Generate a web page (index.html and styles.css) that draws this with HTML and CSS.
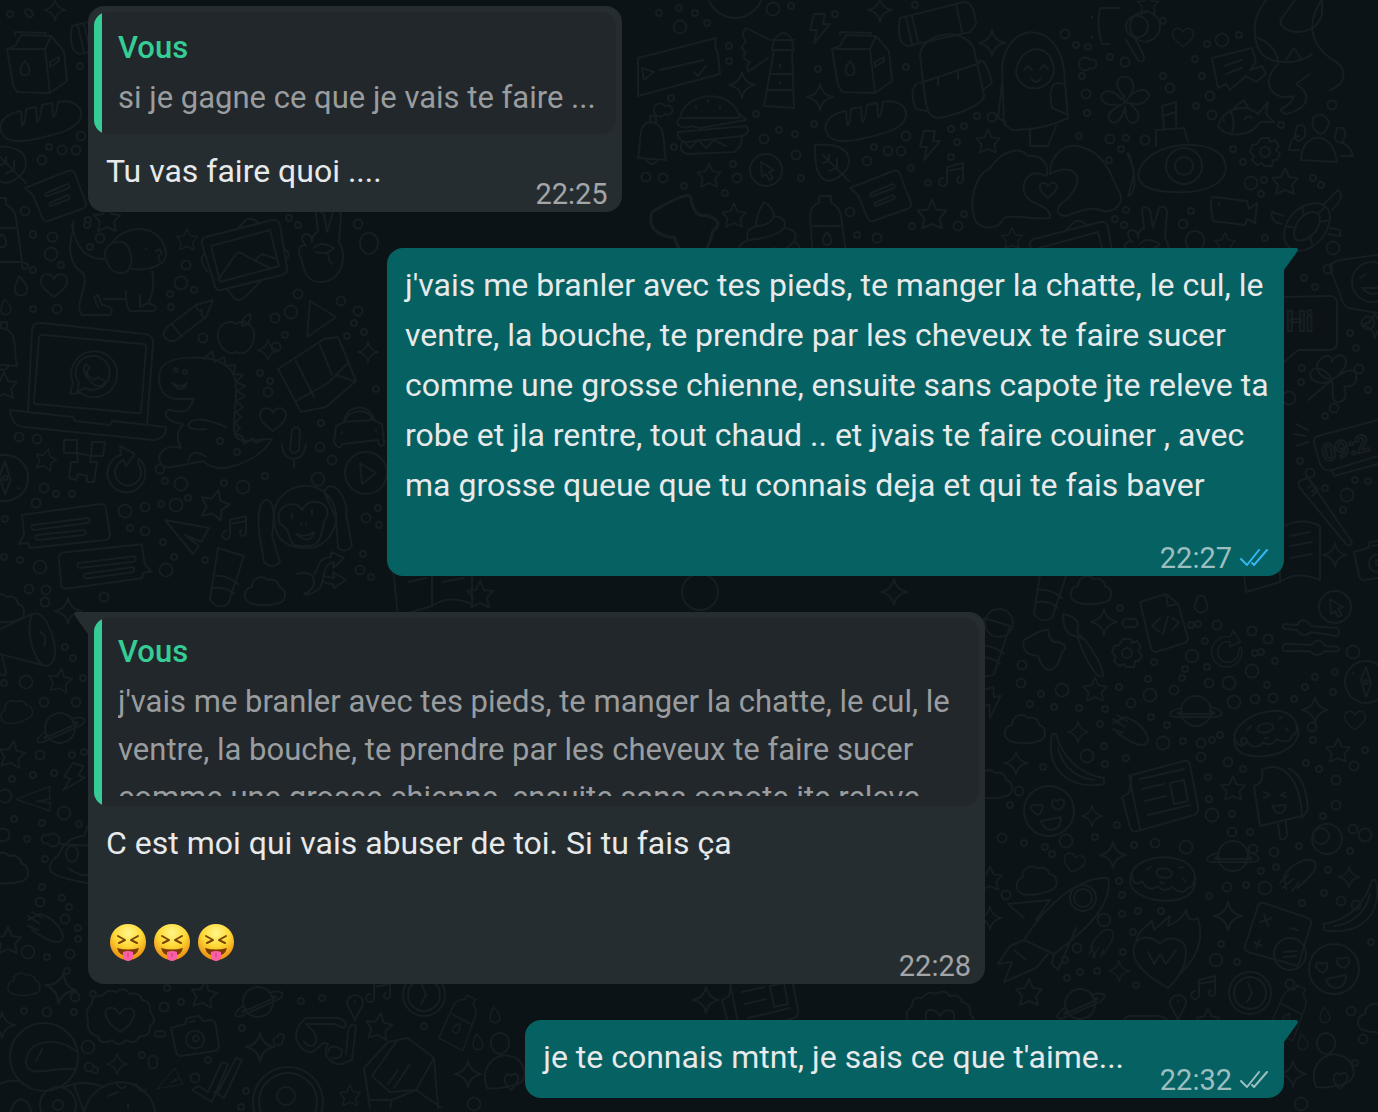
FILE: index.html
```html
<!DOCTYPE html>
<html lang="fr">
<head>
  <meta charset="UTF-8" />
  <meta name="viewport" content="width=device-width, initial-scale=1" />
  <title>Discussion</title>
  <link rel="stylesheet" href="styles.css">
</head>
<body>
  <svg class="wallpaper" viewBox="0 0 1378 1112" preserveAspectRatio="xMidYMin slice" aria-hidden="true">
    <defs>
      <path id="star" d="M0-13 4-4 13-3 7 4 9 13 0 9-9 13-7 4-13-3-4-4Z" />
      <path id="spark" d="M0-13Q2-2 13 0 2 2 0 13-2 2-13 0-2-2 0-13Z" />
      <path id="heart" d="M0 12C-8 6-14 1-13-5-12-12-3-13 0-6 3-13 12-12 13-5 14 1 8 6 0 12Z" />
      <path id="drop" d="M-2-10C4-4 7 0 6 5 4 11-5 11-6 5-7 0-4-4-2-10Z" />
      <path id="egg" d="M0-11C6-11 10-5 9 1 8 7 3 10 0 10-3 10-8 7-9 1-10-5-6-11 0-11Z" />
      <path id="cloud" d="M-15 12C-23 8-21-3-13-4-13-13-3-17 3-11 10-13 14-8 14-4 22-2 22 10 14 12 5 15-7 15-15 12Z" />
      <path id="bolt" d="M-6-14H5L3-4H10L-6 15-3 2H-10Z" />
      <g id="carton">
        <path d="M-22-17-16-28 14-27 27-12 30 18 13 30-20 29-24 22-30-14ZM-30-14 8-14 13 30M8-14 14-27M-22-28V-31L9-30V-27" />
        <path d="M-12-2C-6 5-6 12-12 12-18 12-18 5-12-2ZM13-1 22-6V-2L13 4Z" />
      </g>
      <path id="bread" d="M-38 14C-46 2-34-8-20-10L-19 4Q-16 5-15-12L-5-14-4 1Q-1 1 1-16L11-18 12-4Q15-4 17-19C32-22 42-14 40-4 36 10 12 14-10 19-22 21-34 21-38 14Z" />
      <path id="note" d="M-31-7 12-24Q17-26 19-21L30 8Q31 12 26 14L-8 26Q-12 27-14 22L-23 0ZM-10-2 12-11Q15-9 13-7L-8 1Q-12 2-10-2ZM-6 8 12 0Q15 1 13 4L-5 11Q-8 11-6 8Z" />
      <path id="leaf" d="M-18-18C0-20 16-16 16-2 16 10 0 20-8 17-18 12-18-4-18-18ZM-10-8 16 18M-4-8V-2L-10 0M4-4V5L-4 8" />
      <path id="bottle" d="M-14 30-17-14C-17-22-12-26-8-27V-34H4V-27C10-25 13-20 14-14L20 30ZM-14-4H15M0 2C6 9 5 15 0 15-5 15-6 9 0 2Z" />
      <g id="laptop">
        <path d="M-58 30-54-52Q-53-60-44-59L59-48Q68-47 67-38L61 42M-52 19-47-44Q-47-48-42-47L57-38Q61-38 60-33L55 29Q55 32 51 31L-50 22Q-53 22-52 19Z" />
        <path d="M-76 28-13 35-11 39 24 43 26 39 80 45Q80 57 67 58L-62 45Q-74 44-76 28Z" />
        <path d="M-16 12-13 1A23 23 0 1 1-5 11ZM-9 10-7 1A17 17 0 1 1-1 6ZM0-18C-8-12 8 9 17 3L19-1 12-5 8-2C4-4 0-8 1-11L4-14Z" />
      </g>
      <g id="dino">
        <path d="M31 50C23 53 10 50 6 44-10 46-32 54-36 48-46 36-28 26-17 31-24 16-18 12-15 7-29 5-36-1-30-7-26-9-22-2-10-7L-4-18H-20C-42-18-42-46-34-52-22-62 4-60 18-57 34-50 39-42 38-24 38-8 34 6 37 18 42 28 60 22 74 22 66 36 50 46 31 50Z" />
        <path d="M6-58 14-66 17-55 26-60 28-51 37-52 36-43 45-42 38-35 47-31 39-26 47-21 38-16 45-10 38-5 43 0 37 6 42 11 37 16 45 20 46 27 55 21 58 26 66 22M-26-34Q-16-28-11-34-16-22-26-34M-10 8Q-4-4 28 10M-10 8Q-8 14 8 12M-10 44Q-6 30 8 40" />
        <circle cx="-22" cy="-47" r="2" /><circle cx="-13" cy="-45" r="2" />
      </g>
      <path id="dog" d="M-44-38C-50-20-50 0-35 8-28 20-45 40-36 50H-8Q-2 42-16 40L-20 30-24 32-20 42M-14 34H8M8 26Q8 50 16 46H36Q42 42 30 38L22 42V30M30 38Q38 24 34 6M-46-38-44-44M-46-40Q-40-4-12-6M-12-6C-18-20 2-30 10-18 16-8 14 8 4 8-8 8-10 0-12-6ZM-6-22C8-42 44-42 48-12 50 0 30 6 14 4M28-17V-16M38-14 42-16 44-11Q38-10 42-4" />
      <path id="photo" d="M-38-25 28-42Q34-43 36-37L43 6Q44 11 38 13L-23 28Q-28 29-29 24L-42-18Q-43-24-38-25ZM-33-16 26-32 35 4-24 20ZM-26 18-8-8Q-4-11 2-6L26 6M10-1 18-8 33-3M-8-32 2-42Q8-46 16-38M-16 28-10 36Q-6 40 0 36L16 20M-40-8Q-46-2-36 10M40-14Q48-8 42-2" />
      <path id="peace" d="M-18-8Q-26-18-18-20-12-20-12-12-12-20-6-22L-8-40Q-6-46 0-40L3-22 9-42Q16-46 17-38L15-12C24 2 18 28-4 28-22 28-20 8-24 2-28-8-20-10-18-8M-10-6Q-4-14 10-6 2 2-8-2M4-2Q4 6 8 10" />
      <path id="pencil" d="M-25 12-22 6 8-17 25-22 18-5-12 18Q-20 22-25 12ZM-16 2-6 15M8-17Q8-10 14-12 12-4 18-5" />
      <path id="apple" d="M0-10C8-16 20-8 18 4 16 16 8 22 0 18-8 22-16 14-18 4-20-10-6-16 0-10ZM6-8Q6-18 14-20 16-12 8-8" />
      <path id="map" d="M-38-6 8-36 22-38 40 6 10 32-15 37ZM-20-14-2 22M4-30 16 0M-20 26 12 8 32-12M20 0 38 6" />
      <path id="car" d="M-24 14-22-2-14-6C-12-24 12-26 16-8L24-4 26 16Q22 22 20 12L-16 16Q-18 24-24 14ZM-14-6 14-8C12-20-8-20-14-6ZM-16 4V5M18 2V3" />
      <path id="mic" d="M-4 4-2-16Q2-22 6-16L5 4Q0 10-4 4ZM-12-2Q-12 12 0 13 10 12 12-2M0 13V22" />
      <path id="monkey" d="M0-26C22-28 36-10 34 10 30 28 16 38 0 36-20 34-28 24-28 4-28-14-14-24 0-26ZM-22 12C-30-6-6-14 0-2 8-18 32-8 24 6 18 14 24 36 2 34-20 34-6 20-22 12ZM-6 22Q4 26 12 20 8 34-6 22M-10 2V6M10-2V2M-1 12V13M4 12V13M-40 38C-46 8-44-10-36-12-26-12-28 8-30 24L-22 50Q-30 58-38 50ZM22-20C30-38 48-10 44 2L50 34Q44 42 36 36L34 6Z" />
      <path id="creeper" d="M-20-22H-7V-9H-20ZM8-20H21L19-6H7ZM-7-9 7-6 6 0H13L10 20H3V14L-6 12-8 18-15 16-13 0H-6Z" />
      <path id="refresh" d="M10-13A19 19 0 1 1-8-17L-9-26 6-18-3-6-5-12A13 13 0 1 0 9-8Z" />
      <g id="compass"><circle r="21" /><path d="M0-15 5 2 0 15-5-2ZM-13-9-12-8M12 9 13 10" /><circle r="2" /></g>
      <path id="speech" d="M-42-12 36-23Q42-23 42-18L46 8Q46 12 41 13L-34 21-36 16-45 17-40 8ZM-32-2 24-9Q28-6 24-4L-30 3Q-34 2-32-2ZM-28 8 20 3Q24 5 20 8L-26 13Q-30 12-28 8Z" />
      <path id="plane" d="M-22-16 22-8 14 6-2-1 12 10 6 18Z" />
      <path id="music" d="M-8 7V-7L8-11V6M-8-3 8-6M-8 7A4 4 0 1 1-12 4M8 6A3 3 0 1 1 4 3" />
      <path id="tube" d="M-8-28 18-20 2 28Q-8 34-16 24L-14 10ZM-13 0Q0-2 12 8M-14 12Q0 10 8 18" />
      <g id="play"><circle r="21" /><path d="M-6-10 10 0-4 11Z" /></g>
      <path id="shuffle" d="M-22 2Q-4-2-4 10-4 18-14 22M-14 22Q-8 24 2 16C8 2 4-8 16-10L15-4 26-14 13-20V-15C-2-14 2-4-4 2M6 4 16 6 15 0 28 8 16 16 15 12Q6 12 4 8" />
      <path id="megaphone" d="M-48 12-20-10 22-30Q36-34 44-2 48 20 36 22L-10 10-38 18ZM22-30Q16-14 24 8 30 22 36 22M-16 12-10 30Q-4 34-4 28L-8 12M30-12Q38-8 34 2" />
      <g id="planet"><circle r="15" /><path d="M-14-3C-30 0-28 6-20 6L20 6C30 4 26-2 14-4M-14 1Q-22 3-16 3H16Q22 3 14 0" /></g>
      <path id="glove" d="M-18-8-6-14C8-10 20 4 16 12 10 18-2 10-14 2M-18-12-6-4M-18-2-8 2M-14-16-4-10" />
      <path id="banana" d="M-26-28-22-28C-16-6 0 12 26 16V22C0 28-34 14-26-28ZM-20-14C-16 4-2 16 16 18" />
      <path id="donut" d="M-32 8C-36-12-10-24 12-22 28-20 34-8 32 4 26 26-28 28-32 8ZM-32 0Q-28 14-20 6-12 16-4 8 4 14 10 6 22 14 26 4 32 4 31-8M-8-6C-6-12 8-12 8-6 6 0-8 0-8-6ZM-18-6-14-10M14-14 18-15M20-4 22-1M-2 4H2" />
      <path id="paper" d="M-28-22 24-36Q29-37 30-32L38 10Q39 16 34 18L-22 34Q-28 36-30 30L-38 0-31-4ZM-31-22-20 32M-20-18 24-28M-18-8 4-13M-15 4 6-1M-12 18 30 8M10-14 24-17 28 4 14 7Z" />
      <g id="popsicle"><path d="M-16-30C0-40 22-26 24 16L-18 26-24-14Q-14-16-16-30ZM10-32Q28-24 30 10L24 18M0 24 2 38Q6 42 9 36L8 22M-14-2-8-5-14-8M8-8 3-5 8-3M-6 6 8 5Q6 16-2 12Z" /></g>
      <g id="love"><circle r="25" /><path d="M-11 4C-22-2-18-10-12-5-6-10-4-2-11 4ZM10-1C0-4 2-14 8-10 16-15 18-6 10-1ZM-8 10 12 6Q12 18 2 19-6 18-8 10Z" /></g>
      <g id="calc"><path d="M-14-33 30-18Q34-16 33-12L20 30-30 16Q-34 14-33 10L-20-30Q-18-34-14-33ZM-14-22-10-10M-18-14-6-18M-24 6-16 10M-22 12-18 4M12-8 20-6" /><circle cx="12" cy="18" r="16" /><path d="M6 16 18 15M6 21 18 20" /></g>
      <path id="fireheart" d="M0 38C-36 18-38 2-32-8-24-16-14-12-8-6 0-16 18-12 18 2 18 20 8 30 0 38ZM-32-8C-30-20-22-22-16-30L-14-20 2-34 0-24Q14-30 18-40 20-26 30-32C36-10 30 6 12 24M-20 2-14 14-8 4-2 14 8 0" />
      <g id="rocket"><path d="M-26 16C-4-20 30-48 58-46 64-20 36 6 4 30ZM-26-6-42-20 0-24-14-4M4 30 2 40 8 46 26 4M-26 16-40 22-52 40-38 38-46 58-14 44-2 30M-36 26-24 36" /><circle cx="33" cy="-26" r="13" /><circle cx="33" cy="-26" r="9" /></g>
      <g id="clock"><circle r="21" /><circle r="16" /><path d="M-2-10 2 0-3 9" /></g>
      <g id="gear"><circle r="5" /><path d="M-4-14H4L5-10 10-12 14-6 11-2 15 2 12 8 8 8 7 14H-1L-3 11-8 13-13 8-11 4-15 0-13-7-8-8Z" /></g>
      <path id="code" d="M-24-22 2-30 14-20 24 14Q24 18 20 19L-8 28Q-12 28-13 24ZM2-30 4-18 14-20M-4-6-12 2-4 8M4-8-1 10M8-6 15-2 8 6" />
      <path id="brush" d="M-20-30C-8-28-2-22-6-12L2-4C10 6 20 22 20 32 14 38 0 10-6-8-16-8-20-16-20-30ZM-6-8 2-4" />
      <path id="splat" d="M-20-10Q0-22 4-20 6-6 14-8 26-4 18 2 14 20 4 20-2 18-6 6-24 4-20-10Z" />
      <path id="slide" d="M-27-9-14-8Q-8-18 0-7L26-5Q30 0 26 3L0-1Q-8 6-14-3L-26-4Q-30-6-27-9Z" />
      <g id="pointer"><circle r="16" /><path d="M-5-8 8 0 3 2 7 8 3 10 0 4-4 7Z" /></g>
      <path id="burger" d="M-32-10C-28-36 20-42 28-10ZM-32-10C-40-4-30 2-20-2L-12 0 34-8 28-14M-34 4 34-2Q40 4 30 8L-26 14Q-36 12-34 4ZM-30 14Q-34 24-24 26L22 24Q30 20 30 8M-16-22V-20M-4-28V-26M8-22V-20M-28 14-22 20-14 12-6 20 2 12 14 18" />
      <path id="tower" d="M-8-30Q2-44 10-30L12-20H-10ZM-8-20-18 36 12 38 10-20M-12 4H10M-15 20H10M-2-6V-2M-2 12V14M-10-30H12M-14-12-34 2Q-36-6-32-8-42-12-36-18-44-22-36-28-42-36-36-42L-12-30" />
      <path id="pack" d="M-30-20C-28-42 14-50 24-26L34 20C36 30-8 46-16 42-24 38-24 34-30-20ZM-30 8 30-12M-32 8Q-42 14-34 34L-24 36M28-14Q36-18 42 8L34 14M-12 2V10M8-6V4" />
      <path id="scroll" d="M-34-8 30-24Q40-24 42-2L36 6-26 20Q-38 18-34-8ZM-28-8-22 18M-22-10-16 16M22-22 28 6" />
      <path id="sloth" d="M-32 40-34-16C-30-64 22-64 28-14L32 34Q8 46-24 46ZM-20-12C-16-42 16-42 18-14 16 8-16 12-20-12ZM-12-14-8-18-4-14M4-15 8-19 12-15M-5-6Q0 2 5-6M-6 44V62H12L20 42M-34 0-38 34-30 38M28 0Q10-6 16 24L30 30" />
      <path id="lens" d="M-30-28H-10M-30-28Q-34-10-28 8H-20M0-10A15 15 0 1 1 0-9M-4-10A11 11 0 1 1-4-9M-4 4 8 24Q14 28 14 20L4 0M-38-20V-18M-38 0V2" />
      <path id="flower" d="M0-4C-14-18-6-26 0-24 8-24 12-14 4-4 18-18 28-8 22-2 18 4 10 4 4 2 20 14 12 22 8 22 2 22 0 12 0 6-4 24-14 24-16 18-18 10-8 6-4 4-24 6-26-4-22-8-16-12-8-8-4-2ZM-2-2 2 2M-2 3 3-2" />
      <path id="arrownote" d="M-26-12 14-22 18-8 12 0 24-4 28 4 18 12 8 6-8 20-12 14-20 18ZM-14-4 4-10M-12 4 4-2" />
      <path id="fish" d="M-26 8C-22-8 0-16 14-4L24-16 22-4 30 4 16 4C6 20-18 20-26 8ZM-14-8Q-8 4-12 14M-10-10 0-18 4-10M-20 2V3M0 2Q4-4 8 0" />
      <path id="hands" d="M-70 40C-78 20-72-6-56-14-44-32-26-36-18-26-2-28 4-14 0-6-16-14-24-2-22 10-18 24 6 22 4 36-14 38-30 32-42 36-48 48-62 48-70 40ZM4-8C4-26 18-42 38-34 60-28 68 0 72 8 82 20 66 34 54 28 46 24 30 30 20 34 8 34 10 24 20 18 30 8 38-6 24-12 14-14 8-10 4-8ZM2 16C-14 4-2-4 2 4 8-4 18 4 2 16Z" />
      <g id="eye"><path d="M-34 10C-32-20 28-32 50-10 64 14 36 28 4 26-18 26-32 22-34 10ZM-38 4Q-48-20-42-10L-38 8Q-36 28-44 30L-38 8M-16-20V-36L12-38 16-24M-8-36-10-60 4-64V-40M-10-50 4-54" /><circle cx="12" cy="0" r="18" /><circle cx="12" cy="0" r="9" /></g>
      <path id="people" d="M-20 18C-20-10 12-14 16 20ZM-8-24Q2-32 8-20 4-4-4-10-10-14-8-24M-24-16Q-14-20-16-6-24 4-26-6ZM16-14Q28-16 22 0 14 2 14-6ZM-22 8H-32Q-30-6-22-6M20 0Q30 4 32 14H20" />
      <path id="camcorder" d="M-20-14 14-10 16-2 24-8 22 12 14 8 12 14-20 10Q-24-14-20-14ZM-14-8V-6" />
      <path id="turtle" d="M-24 12C-24-20 20-32 22-8 22 22-20 42-24 12ZM-14 10C-12-12 10-18 12-6 12 14-14 24-14 10ZM-22 2-12 4M-6-18-4-8M16-16 10-10M22-4 12-2M4 20 2 12M-24-8-36-12Q-38-2-26 0M16-20 30-34Q38-28 24-14M22 4 32 6V12L20 10" />
      <path id="whip" d="M-28 30Q-36 20-22 14-26 4-14 0-14-12-6-24 4-18 4-10 18-8 14 2 30 4 24 16 34 20 28 34M-22 14Q6 12 14 2M-14 0Q0 0 4-10M-28 30Q-4 30 4 22L12 26 24 16" />
      <path id="snake" d="M24-56C-18-48-40-20-28 14-18 34 14 30 26 20M40-40C24-20 18 4 44 24 64 34 60 50 44 56M-8 30C-28 50-12 68 8 62 4 76-14 74 0 80 24 74 26 60 10 50L24 40M36-44V-20C28 10-14-4-4-16L16-44M-28 4Q-12 10-8 26M0 26 8 14 16 26" />
      <path id="clover" d="M0 0C-16-4-18-14-12-20-8-26 0-26 0-18 4-28 14-26 14-18 14-10 6-4 0 0 16-12 24-12 24-4 26 2 20 8 12 6 16 18 12 22 6 22-2 22 2 12 0 0-6-12-20-16-22-6-22 2-8 6 0 0ZM0 0-24 20" />
      <path id="toothbrush" d="M-26-28Q-30-34-24-36L-18-38 26 26Q24 32 20 28ZM-18-38-8-26-14-20M-14-32-18-28M-10-28-14-24" />
      <g id="smile"><path d="M-18-20 26-26V34L-10 28Q-16 24-18 14L-28-12Q-28-18-18-20Z" /><circle cx="14" cy="2" r="20" /><path d="M2-2 8-6M4 8H24Q16 20 4 8" /></g>
      <path id="camera" d="M-24-8-10-12-8-18 4-20 8-15 16-16Q20-16 21-10L24 10Q24 14 20 15L-14 20Q-18 20-19 16ZM-9 3A9 9 0 1 1-9 4M-2 2A3 3 0 1 1-2 3M-6-14 0-15" />
      <path id="glasses" d="M-26-18C-36-4-24 12-14 10-6 6-4-2 2 2-6 14 8 24 16 22L26 18 30-16Q24-20 22-10L20 12M-26-18-20-24 12-24Q24-20 18-14L8-18-20-18Q-8-8-10 0-14 8-22 0M2 10Q4 0 16 8 16 18 6 16" />
      <path id="badge" d="M-32 2Q-36-8-28-14-28-24-18-22-12-30-4-26 4-32 10-24 20-26 22-18 32-16 30-6 38 2 30 8 30 20 20 18 14 28 6 22-2 30-8 22-20 28-22 18-34 16-32 2ZM0 14C-20 0-16-12-8-10-2-10-2-4 0-4 4-12 16-12 14-2 12 6 6 10 0 14Z" />
      <g id="astro"><circle r="34" /><path d="M32-6C10-22-18-16-18 6-16 22 8 10 32 12M-8 4-2-8M-26 24Q-44 22-50 34M20 30Q40 22 60 30M-34 62C-34 36-12 36-12 62M30 28 42 60" /><circle cx="14" cy="48" r="18" /><circle cx="14" cy="48" r="5" /></g>
      <path id="cow" d="M-38 30C-34 6-20-8 4-8 28-4 36 14 36 30M-12 6-2 2M-4-8Q0 2 6-4M16-6Q20 4 26 0M8 14V18" />
      <path id="ticks" d="M-26 10-20 6-10 12 4-18 10-16-6 22ZM0 12 18-22 24-20 6 18-4 12" />
      <path id="gem" d="M-40-10-16-36 4-40 30-20 34 30M-40-10-34 30M-32-2-8-36M-32-2-14 14 12 12 30-20M-36 22H-12L12 12 38 30M-12 22-14 30M-16 6-6-8M-10 10 6-14" />
      <path id="mushroom" d="M-18 14C-26-8-8-22 4-18 18-16 24 0 16 8 10 12-10 16-18 14ZM6 16C-6 6 2-4 6 2 10-4 20 2 6 16Z" />
      <path id="pin" d="M0 14C-4 4-8 2-8-4-6-14 8-12 8-4 8 2 4 4 0 14ZM0-5V-4" />
      <path id="bell" d="M-14 18 14 20C10 4 16-14 0-18-16-18-10 2-14 18ZM-2-18V-24H4V-18M-6 20Q0 28 6 20" />
      <path id="boat" d="M-34 10C-36 0-24-4-24-8-18-22-4-24 0-24L4-34 10-28V24Q-30 18-34 10ZM-18-6A6 8 0 1 1-6-6 6 8 0 1 1-18-6M-16 8Q0 20 10 12M-24-16 10-14" />
      <path id="book" d="M-40-30 0-38Q20-50 40-40V14Q16 4 0 16L-34 26ZM0-38V16M-26-18-8-22M-24-8-6-12M10-30 30-34M10-20 32-24M10-8 32-12" />
      <path id="banner" d="M-40-8 38-28Q36-18 40-12L42 8-40 30ZM-36 2-24 6-34 14ZM-18 4 26-6M16 6 20 10 28 0" />
      <path id="dots-s" d="M10 14h0M30 14h0M28 12h0M80 66h0M49 147h0M33 235h0M87 225h0M25 266h0M88 220h0M33 234h0M61 265h0M33 270h0M33 309h0M90 247h0M170 294h0M171 307h0M194 290h0M289 218h0M298 225h0M285 335h0M347 336h0M354 323h0M364 332h0M260 373h0M270 381h0M321 423h0M376 389h0M56 494h0M72 494h0M165 481h0M188 498h0M161 504h0M224 483h0M265 476h0M220 441h0M237 452h0M5 519h0M4 557h0M20 560h0M130 528h0M163 542h0M174 557h0M205 560h0M363 554h0M379 525h0M378 508h0M371 577h0M4 683h0M65 647h0M73 658h0M83 678h0M72 755h0M84 752h0M12 779h0M33 775h0M54 773h0M14 819h0M42 823h0M79 824h0M27 839h0M45 859h0M42 887h0M62 898h0M69 907h0M78 928h0M78 939h0M47 957h0M67 971h0M24 1011h0M74 1012h0M93 994h0M167 988h0M181 1002h0M242 1028h0M281 1037h0M162 1034h0M158 1034h0M95 1070h0M208 1060h0M246 1091h0M241 1107h0M301 1001h0M322 998h0M424 1026h0M142 1055h0M659 13h0M679 8h0M695 13h0M707 23h0M729 61h0M729 46h0M791 6h0M835 14h0M818 69h0M906 67h0M915 5h0M671 98h0M756 114h0M779 130h0M795 134h0M814 124h0M733 164h0M801 178h0M725 193h0M684 186h0M674 147h0M874 147h0M887 150h0M957 142h0M951 157h0M951 129h0M964 126h0M977 116h0M911 168h0M928 183h0M964 214h0M857 235h0M912 226h0M1079 136h0M1087 113h0M1082 76h0M1076 45h0M1088 47h0M1110 57h0M1163 21h0M1163 76h0M1195 59h0M1207 44h0M1202 76h0M1196 106h0M1239 35h0M1126 138h0M1121 149h0M1109 160h0M1126 210h0M1115 219h0M1124 225h0M1191 211h0M1243 162h0M1233 149h0M1281 125h0M1313 178h0M1321 185h0M1264 180h0M1261 194h0M1265 238h0M1315 287h0M1304 278h0M1350 333h0M1356 348h0M1302 368h0M1301 382h0M1325 416h0M1368 390h0M1300 461h0M1325 488h0M1343 510h0M1355 480h0M1368 481h0M1120 608h0M1191 625h0M1154 662h0M1185 669h0M1198 624h0M1255 653h0M1205 641h0M1148 679h0M1182 678h0M1207 667h0M1261 652h0M1275 661h0M1315 677h0M1333 692h0M1335 672h0M1305 687h0M1294 699h0M1267 685h0M1173 690h0M1119 687h0M1105 709h0M1079 708h0M1041 694h0M1030 704h0M1054 707h0M1100 724h0M1151 717h0M1167 725h0M1183 741h0M1220 735h0M1212 740h0M1244 741h0M1313 740h0M1365 750h0M1104 746h0M1126 758h0M1105 764h0M1043 767h0M1243 769h0M1306 763h0M1319 769h0M1208 777h0M1010 805h0M1117 825h0M1209 799h0M1232 814h0M1250 832h0M1024 843h0M1045 847h0M1052 854h0M1095 837h0M1134 845h0M1299 846h0M1323 816h0M1350 851h0M1119 881h0M1122 895h0M1138 911h0M1122 914h0M1161 911h0M1209 896h0M1246 885h0M1261 871h0M1276 867h0M1302 903h0M1324 893h0M1328 870h0M1133 932h0M1123 952h0M1237 962h0M1221 944h0M1065 960h0M1080 972h0M1097 971h0M1136 985h0M1067 978h0M1371 942h0M1355 1063h0" />
      <path id="dots-m" d="M81 136h0M62 150h0M76 150h0M42 160h0M25 211h0M52 237h0M53 237h0M100 238h0M51 254h0M186 265h0M57 309h0M203 338h0M275 318h0M298 294h0M341 301h0M358 224h0M358 311h0M276 347h0M19 437h0M37 439h0M268 392h0M320 447h0M332 460h0M44 488h0M36 503h0M160 469h0M145 507h0M145 531h0M366 518h0M360 570h0M29 589h0M46 590h0M104 597h0M45 602h0M44 702h0M76 702h0M40 755h0M26 683h0M46 839h0M40 902h0M65 919h0M28 952h0M70 954h0M47 1012h0M75 997h0M89 1067h0M153 1064h0M153 1060h0M195 1078h0M164 1007h0M278 1041h0M180 50h0M668 110h0M764 139h0M646 177h0M663 178h0M737 178h0M796 155h0M867 161h0M888 151h0M901 151h0M906 136h0M992 117h0M958 226h0M1065 34h0M1092 64h0M1125 62h0M1086 94h0M1170 88h0M1210 96h0M1212 115h0M1110 139h0M1145 140h0M1183 224h0M1332 105h0M877 238h0M850 212h0M1328 269h0M1359 369h0M1334 408h0M1310 473h0M1201 600h0M1127 623h0M1133 623h0M1217 625h0M1268 639h0M1252 631h0M1021 683h0M1022 665h0M1063 691h0M1131 703h0M1174 690h0M1209 683h0M1255 699h0M1273 698h0M1228 762h0M1201 757h0M1201 743h0M1312 727h0M1354 766h0M1336 780h0M1353 829h0M1336 805h0M1019 791h0M1002 838h0M1006 895h0M1155 843h0M1232 832h0M1227 887h0M1253 849h0M1274 852h0M1356 905h0M1341 901h0M1077 948h0M1290 984h0M1351 1011h0M1363 1039h0" />
      <path id="dots-l" d="M51 254h0M181 283h0M291 312h0M318 479h0M243 487h0M181 484h0M176 505h0M166 570h0M125 511h0M40 567h0M26 682h0M64 813h0M5 796h0M3 835h0M53 840h0M28 952h0M88 1047h0M680 27h0M773 9h0M660 110h0M1085 64h0M1222 40h0M1251 183h0M1368 323h0M1333 248h0M1289 398h0M1347 495h0M1201 606h0M1192 656h0M1229 683h0M1252 671h0M1353 652h0M1150 695h0M1062 690h0M1234 702h0M1163 743h0M1087 756h0M1212 815h0M1066 841h0M1186 847h0M1265 888h0M1104 920h0M1216 960h0M1365 835h0M474 1104h0M1301 1104h0" />
    </defs>

    <g class="dots">
      <use href="#dots-s" class="dot-small" />
      <use href="#dots-m" class="dot-medium" />
      <use href="#dots-l" class="dot-large" />
    </g>
    <g class="dots dots-inner">
      <use href="#dots-s" class="dot-small" />
      <use href="#dots-m" class="dot-medium" />
      <use href="#dots-l" class="dot-large" />
    </g>

    <g class="doodles">
      <use href="#carton" transform="translate(37 63)" />
      <use href="#carton" transform="translate(862 63)" />
      <use href="#bread" transform="translate(41 121)" />
      <use href="#bread" transform="translate(866 121)" />
      <use href="#note" transform="translate(56 195)" />
      <use href="#note" transform="translate(881 195)" />
      <use href="#leaf" transform="translate(10 165)" />
      <use href="#leaf" transform="translate(833 163)" />
      <use href="#bottle" transform="translate(2 232)" />
      <use href="#bottle" transform="translate(827 230)" />
      <use href="#scroll" transform="translate(106 34)" />
      <use href="#scroll" transform="translate(934 26)" />
      <use href="#pack" transform="translate(950 75)" />
      <use href="#sloth" transform="translate(1036 84)" />
      <use href="#lens" transform="translate(1130 36)" />
      <use href="#flower" transform="translate(1125 101)" />
      <use href="#arrownote" transform="translate(1238 70)" />
      <use href="#fish" transform="translate(1244 118)" />
      <use href="#burger" transform="translate(712 128)" />
      <use href="#tower" transform="translate(782 70)" />
      <use href="#banner" transform="translate(678 66)" />
      <use href="#hands" transform="translate(1046 182)" />
      <use href="#eye" transform="translate(1172 166)" />
      <use href="#people" transform="translate(1321 142)" />
      <use href="#camcorder" transform="translate(1233 211)" />
      <use href="#turtle" transform="translate(1308 224)" />
      <use href="#whip" transform="translate(770 226)" />
      <use href="#peace" transform="translate(1150 250)" />
      <use href="#snake" transform="translate(1286 34)" />
      <use href="#bell" transform="translate(652 140)" />
      <use href="#splat" transform="translate(684 228) scale(1.6)" />
      <use href="#pointer" transform="translate(766 170)" />
      <use href="#gear" transform="translate(1265 152)" />
      <use href="#dog" transform="translate(118 265)" />
      <use href="#photo" transform="translate(244 262)" />
      <use href="#photo" transform="translate(1072 264)" />
      <use href="#peace" transform="translate(324 254)" />
      <use href="#pencil" transform="translate(188 322)" />
      <use href="#apple" transform="translate(236 334)" />
      <use href="#map" transform="translate(316 375)" />
      <use href="#laptop" transform="translate(86 382)" />
      <use href="#dino" transform="translate(198 417)" />
      <use href="#car" transform="translate(358 428)" />
      <use href="#mic" transform="translate(294 446)" />
      <use href="#monkey" transform="translate(302 512)" />
      <use href="#play" transform="translate(366 473)" />
      <use href="#creeper" transform="translate(84 462)" />
      <use href="#refresh" transform="translate(129 472)" />
      <use href="#compass" transform="translate(5 478) scale(1.1)" />
      <use href="#speech" transform="translate(64 527)" />
      <use href="#speech" transform="translate(104 566) scale(-1 1) rotate(14)" />
      <use href="#plane" transform="translate(187 536)" />
      <use href="#tube" transform="translate(226 576)" />
      <use href="#shuffle" transform="translate(318 572)" />
      <use href="#bell" transform="translate(3 346)" />
      <use href="#book" transform="translate(432 590)" />
      <use href="#megaphone" transform="translate(10 644)" />
      <use href="#planet" transform="translate(60 728) rotate(-24)" />
      <use href="#plane" transform="translate(38 801) rotate(-32) scale(.8)" />
      <use href="#boat" transform="translate(84 860)" />
      <use href="#glove" transform="translate(46 928)" />
      <use href="#bolt" transform="translate(74 778) rotate(20)" />
      <use href="#splat" transform="translate(1044 650)" />
      <use href="#brush" transform="translate(1083 644)" />
      <use href="#code" transform="translate(1164 624)" />
      <use href="#gear" transform="translate(1127 653)" />
      <use href="#refresh" transform="translate(1229 652) rotate(30) scale(.8)" />
      <use href="#slide" transform="translate(1311 633)" />
      <use href="#slide" transform="translate(1310 652) scale(-1 1) rotate(-8)" />
      <use href="#pointer" transform="translate(1335 607)" />
      <use href="#compass" transform="translate(1366 682)" />
      <use href="#planet" transform="translate(1196 711)" />
      <use href="#donut" transform="translate(1266 734) rotate(-6)" />
      <use href="#banana" transform="translate(1078 762)" />
      <use href="#glove" transform="translate(1131 731)" />
      <use href="#paper" transform="translate(1160 797)" />
      <use href="#popsicle" transform="translate(1278 800)" />
      <use href="#love" transform="translate(1049 811)" />
      <use href="#planet" transform="translate(1233 856)" />
      <use href="#donut" transform="translate(1163 879) rotate(10)" />
      <use href="#rocket" transform="translate(1050 924)" />
      <use href="#calc" transform="translate(1278 936)" />
      <use href="#fireheart" transform="translate(1168 950)" />
      <use href="#love" transform="translate(1334 969)" />
      <use href="#banana" transform="translate(1350 908) scale(-1 1)" />
      <use href="#glove" transform="translate(1299 874) rotate(-74)" />
      <use href="#glove" transform="translate(1102 943) rotate(-90) scale(.8)" />
      <use href="#clock" transform="translate(1250 993)" />
      <use href="#tube" transform="translate(1050 590)" />
      <use href="#tube" transform="translate(992 646)" />
      <use href="#book" transform="translate(1280 566)" />
      <use href="#smile" transform="translate(1358 280)" />
      <use href="#clover" transform="translate(1332 380)" />
      <use href="#toothbrush" transform="translate(1326 516)" />
      <use href="#camera" transform="translate(1378 560)" />
      <use href="#badge" transform="translate(120 1018)" />
      <use href="#planet" transform="translate(258 1002) rotate(-24)" />
      <use href="#camera" transform="translate(195 1036)" />
      <use href="#glasses" transform="translate(326 1042)" />
      <use href="#clock" transform="translate(424 995)" />
      <use href="#bottle" transform="translate(460 1022) rotate(28) scale(.8)" />
      <use href="#astro" transform="translate(44 1057)" />
      <use href="#cow" transform="translate(120 1090)" />
      <use href="#plane" transform="translate(172 1082) rotate(-60) scale(.6)" />
      <use href="#ticks" transform="translate(218 1080)" />
      <use href="#gem" transform="translate(404 1078)" />
      <use href="#mushroom" transform="translate(505 1074)" />
      <use href="#mushroom" transform="translate(1334 1073)" />
      <use href="#paper" transform="translate(760 1000)" />
      <use href="#planet" transform="translate(1080 1004) rotate(-24)" />
      <use href="#glasses" transform="translate(1148 1040)" />
      <use href="#badge" transform="translate(940 1020)" />
      <use href="#bottle" transform="translate(1290 1012) rotate(28) scale(.8)" />
      <circle cx="288" cy="1102" r="35" />
      <circle cx="288" cy="1102" r="29" />
      <circle cx="286" cy="1096" r="9" />
      <circle cx="1327" cy="839" r="15" />
      <circle cx="1321" cy="836" r="8" />
      <circle cx="735" cy="-10" r="28" />
      <circle cx="999" cy="623" r="14" />
      <circle cx="700" cy="592" r="18" />

      <path d="M1284 297 1330 296Q1336 296 1337 302V344Q1336 350 1330 350H1298L1284 362" />
      <path d="M1378 420 1318 436Q1312 438 1315 446L1320 464Q1324 472 1332 470L1378 456M1332 470 1334 476 1378 464" />
      <path d="M1296 424 1308 430M1294 434 1306 436M1296 446 1308 442" />
      <text x="1286" y="331" class="doodle-text">Hi</text>
      <text x="1324" y="462" class="doodle-text doodle-digits" transform="rotate(-14 1324 462)">09:2</text>
    </g>

    <g class="doodles">
      <use href="#star" transform="translate(187 239) scale(.8)" />
      <use href="#star" transform="translate(107 218)" />
      <use href="#star" transform="translate(46 459) rotate(14) scale(.8)" />
      <use href="#star" transform="translate(4 385)" />
      <use href="#star" transform="translate(215 504) rotate(14) scale(1.1)" />
      <use href="#star" transform="translate(60 680) rotate(8) scale(.9)" />
      <use href="#star" transform="translate(12 754) rotate(8)" />
      <use href="#star" transform="translate(8 940)" />
      <use href="#star" transform="translate(204 994) rotate(8)" />
      <use href="#star" transform="translate(379 1026) rotate(8)" />
      <use href="#star" transform="translate(350 1095) scale(.8)" />
      <use href="#star" transform="translate(709 175) scale(.9)" />
      <use href="#star" transform="translate(988 141) scale(.9)" />
      <use href="#star" transform="translate(734 215) scale(.9)" />
      <use href="#star" transform="translate(932 214) scale(1.1)" />
      <use href="#star" transform="translate(1012 238) scale(.8)" />
      <use href="#star" transform="translate(1285 181)" />
      <use href="#star" transform="translate(1148 4) scale(.8)" />
      <use href="#star" transform="translate(1225 243) scale(.8)" />
      <use href="#star" transform="translate(1095 689) scale(.9)" />
      <use href="#star" transform="translate(1338 750) scale(.9)" />
      <use href="#star" transform="translate(1233 788) scale(.9)" />
      <use href="#star" transform="translate(990 878) scale(.9)" />
      <use href="#star" transform="translate(1029 992)" />
      <use href="#star" transform="translate(1208 1020) scale(.9)" />
      <use href="#star" transform="translate(480 594)" />
      <use href="#spark" transform="translate(55 10) scale(.8)" />
      <use href="#spark" transform="translate(268 350) scale(.8)" />
      <use href="#spark" transform="translate(368 352) scale(.8)" />
      <use href="#spark" transform="translate(68 611)" />
      <use href="#spark" transform="translate(61 988) rotate(10) scale(1.2)" />
      <use href="#spark" transform="translate(2 1025)" />
      <use href="#spark" transform="translate(117 1064) scale(.8)" />
      <use href="#spark" transform="translate(260 1047) scale(1.1)" />
      <use href="#spark" transform="translate(468 1074)" />
      <use href="#spark" transform="translate(992 43)" />
      <use href="#spark" transform="translate(742 85)" />
      <use href="#spark" transform="translate(820 97)" />
      <use href="#spark" transform="translate(880 10) scale(.9)" />
      <use href="#spark" transform="translate(1375 325)" />
      <use href="#spark" transform="translate(1335 555) scale(.9)" />
      <use href="#spark" transform="translate(1104 622)" />
      <use href="#spark" transform="translate(1078 732) scale(.8)" />
      <use href="#spark" transform="translate(1016 763) scale(.9)" />
      <use href="#spark" transform="translate(1092 816) scale(.8)" />
      <use href="#spark" transform="translate(1113 855)" />
      <use href="#spark" transform="translate(1315 710)" />
      <use href="#spark" transform="translate(1349 877) scale(.8)" />
      <use href="#spark" transform="translate(1228 916) scale(1.1)" />
      <use href="#spark" transform="translate(1119 971) scale(.8)" />
      <use href="#spark" transform="translate(990 918) scale(.9)" />
      <use href="#spark" transform="translate(706 1000)" />
      <use href="#spark" transform="translate(1293 1074)" />
      <use href="#spark" transform="translate(894 592)" />
      <use href="#heart" transform="translate(54 285)" />
      <use href="#heart" transform="translate(273 419)" />
      <use href="#heart" transform="translate(1183 37) scale(.8)" />
      <use href="#heart" transform="translate(1355 720) scale(.8)" />
      <use href="#heart" transform="translate(1074 863) rotate(14) scale(.8)" />
      <use href="#cloud" transform="translate(265 591)" />
      <use href="#cloud" transform="translate(4 608)" />
      <use href="#cloud" transform="translate(16 711) rotate(-14) scale(.8)" />
      <use href="#cloud" transform="translate(6 868) scale(1.1)" />
      <use href="#cloud" transform="translate(24 984) scale(.8)" />
      <use href="#cloud" transform="translate(1025 729)" />
      <use href="#cloud" transform="translate(1036 880) rotate(-8)" />
      <use href="#cloud" transform="translate(1091 590)" />
      <use href="#cloud" transform="translate(992 784)" />
      <use href="#cloud" transform="translate(1378 1018)" />
      <use href="#drop" transform="translate(21 286)" />
      <use href="#drop" transform="translate(6 307) scale(.8)" />
      <use href="#drop" transform="translate(495 1015) scale(.8)" />
      <use href="#drop" transform="translate(478 1042) scale(.8)" />
      <use href="#drop" transform="translate(1325 1015) scale(.8)" />
      <use href="#drop" transform="translate(1303 1042) scale(.8)" />
      <use href="#egg" transform="translate(500 1044)" />
      <use href="#egg" transform="translate(1326 1044)" />
      <use href="#egg" transform="translate(369 244)" />
      <use href="#egg" transform="translate(1195 242)" />
      <use href="#bolt" transform="translate(820 28)" />
      <use href="#bolt" transform="translate(930 145)" />
      <use href="#bolt" transform="translate(992 702) rotate(-14)" />
      <use href="#music" transform="translate(238 527)" />
      <use href="#music" transform="translate(955 174)" />
      <use href="#music" transform="translate(382 990)" />
      <use href="#music" transform="translate(1207 987)" />
      <use href="#pin" transform="translate(355 1006)" />
      <use href="#pin" transform="translate(1178 1006)" />
      <path d="M310 301 336 317 307 337Z" />
    </g>
  </svg>

  <svg class="sprite" aria-hidden="true">
    <defs>
      <radialGradient id="face" cx="50%" cy="25%" r="75%">
        <stop offset="0" stop-color="#fff68a" />
        <stop offset=".5" stop-color="#ffd835" />
        <stop offset="1" stop-color="#ea8a10" />
      </radialGradient>
      <symbol id="squint" viewBox="0 0 38 40">
        <circle cx="19" cy="19" r="18" fill="url(#face)" />
        <path d="M9 13 16 17 10 20M29 13 22 17 28 20" fill="none" stroke="#7a4408" stroke-width="2" stroke-linecap="round" stroke-linejoin="round" />
        <path d="M8 25Q19 28 30 25 28 33 19 33 10 33 8 25Z" fill="#7a3a06" />
        <path d="M14 29Q19 27 24 29V34Q23 38 19 38 15 38 14 34Z" fill="#fb5fa6" />
        <path d="M19 30V34" stroke="#d93684" stroke-width="1" />
      </symbol>
      <symbol id="double-check" viewBox="0 0 28 18">
        <path d="M1 10 7 16 19 1M12 14 14 16 27 1" fill="none" stroke="currentColor" stroke-width="2" stroke-linecap="round" stroke-linejoin="round" />
      </symbol>
    </defs>
  </svg>

  <main class="chat">
    <article class="bubble incoming">
      <blockquote class="quote">
        <div class="quote-author">Vous</div>
        <p class="quote-text">si je gagne ce que je vais te faire ...</p>
      </blockquote>
      <div class="body">
        <p class="message">Tu vas faire quoi ....</p>
        <div class="meta"><time>22:25</time></div>
      </div>
    </article>

    <article class="bubble outgoing tail wide">
      <div class="body">
        <p class="message">j'vais me branler avec tes pieds, te manger la chatte, le cul, le<br>ventre, la bouche, te prendre par les cheveux te faire sucer<br>comme une grosse chienne, ensuite sans capote jte releve ta<br>robe et jla rentre, tout chaud .. et jvais te faire couiner , avec<br>ma grosse queue que tu connais deja et qui te fais baver<br><br></p>
        <div class="meta">
          <time>22:27</time>
          <svg class="check read" role="img" aria-label="Lu"><use href="#double-check" /></svg>
        </div>
      </div>
    </article>

    <article class="bubble incoming tail wide">
      <blockquote class="quote">
        <div class="quote-author">Vous</div>
        <p class="quote-text">j'vais me branler avec tes pieds, te manger la chatte, le cul, le<br>ventre, la bouche, te prendre par les cheveux te faire sucer<br>comme une grosse chienne, ensuite sans capote jte releve</p>
      </blockquote>
      <div class="body">
        <p class="message">C est moi qui vais abuser de toi. Si tu fais ça<br><br>
          <span class="emojis" role="img" aria-label="Trois visages qui tirent la langue"><svg class="emoji"><use href="#squint" /></svg><svg class="emoji"><use href="#squint" /></svg><svg class="emoji"><use href="#squint" /></svg></span>
        </p>
        <div class="meta"><time>22:28</time></div>
      </div>
    </article>

    <article class="bubble outgoing tail short">
      <div class="body">
        <p class="message">je te connais mtnt, je sais ce que t'aime...</p>
        <div class="meta">
          <time>22:32</time>
          <svg class="check" role="img" aria-label="Distribué"><use href="#double-check" /></svg>
        </div>
      </div>
    </article>
  </main>
</body>
</html>
```
FILE: styles.css
```css
* {
  box-sizing: border-box;
}
body {
  margin: 0;
  min-height: 100vh;
  background: #0b1317;
  color: #e7e9ea;
  font-family: Roboto, "Liberation Sans", sans-serif;
  position: relative;
  overflow-x: hidden;
}
p,
blockquote {
  margin: 0;
}

/* wallpaper */
.wallpaper {
  position: absolute;
  inset: 0;
  width: 100%;
  height: 100%;
  z-index: -1;
}
.doodles {
  fill: none;
  stroke: #171e22;
  stroke-width: 2;
  stroke-linejoin: round;
  stroke-linecap: round;
}
.doodle-text {
  font-size: 28px;
  font-weight: bold;
}
.doodle-digits {
  font-size: 24px;
}
.dots {
  fill: none;
  stroke: #171e22;
  stroke-linecap: round;
}
.dot-small {
  stroke-width: 8px;
}
.dot-medium {
  stroke-width: 11px;
}
.dot-large {
  stroke-width: 15px;
}
.dots-inner {
  stroke: #0b1317;
}
.dots-inner .dot-small {
  stroke-width: 4px;
}
.dots-inner .dot-medium {
  stroke-width: 7px;
}
.dots-inner .dot-large {
  stroke-width: 11px;
}
.sprite {
  position: absolute;
  width: 0;
  height: 0;
}

/* conversation */
.chat {
  display: flex;
  flex-direction: column;
  gap: 36px;
  padding: 6px 94px 14px 88px;
}
.bubble {
  position: relative;
  max-width: 75%;
  border-radius: 16px;
}
.wide {
  width: 75%;
}
.incoming {
  align-self: flex-start;
  background: #262d31;
  padding: 6px 6px 0;
}
.outgoing {
  align-self: flex-end;
  background: #056162;
}
.tail::before {
  content: "";
  position: absolute;
  top: 0;
  width: 14px;
  height: 22px;
  background: inherit;
}
.incoming.tail {
  border-top-left-radius: 0;
}
.incoming.tail::before {
  right: 100%;
  clip-path: path("M14 0H2Q-1 0 1 4L14 22Z");
}
.outgoing.tail {
  border-top-right-radius: 0;
}
.outgoing.tail::before {
  left: 100%;
  clip-path: path("M0 0H12Q15 0 13 4L0 22Z");
}

/* quoted message */
.quote {
  display: flex;
  flex-direction: column;
  justify-content: center;
  min-height: 122px;
  padding: 10px 20px 10px 24px;
  border-radius: 14px;
  background: linear-gradient(to right, #35cd96 8px, #22272b 8px);
  font-size: 31px;
  line-height: 48px;
}
.quote-author {
  color: #35cd96;
  font-weight: 500;
}
.quote-text {
  margin-top: 2px;
  max-height: 118px;
  overflow: hidden;
  color: #9a9d9f;
}

/* text and time share one cell, so the time sits over the last line */
.body {
  display: grid;
}
.message,
.meta {
  grid-area: 1 / 1;
}
.message {
  padding: 12px 8px 16px 18px;
  font-size: 32px;
  line-height: 50px;
}
.incoming .message {
  padding: 12px 12px 16px;
}
.short .message {
  padding-right: 160px;
}
.meta {
  place-self: end;
  display: flex;
  align-items: center;
  gap: 8px;
  padding: 0 16px 4px 0;
  color: #a3a5a7;
  font-size: 29px;
  line-height: 28px;
}
.incoming .meta {
  padding-right: 8px;
}
.outgoing .meta {
  color: #9bbfc0;
}
.check {
  width: 28px;
  height: 18px;
}
.check.read {
  color: #34b7f1;
}
.emojis {
  display: inline-flex;
  align-items: center;
  gap: 6px;
  height: 50px;
  padding-left: 3px;
  vertical-align: top;
}
.emoji {
  width: 38px;
  height: 40px;
}
```
